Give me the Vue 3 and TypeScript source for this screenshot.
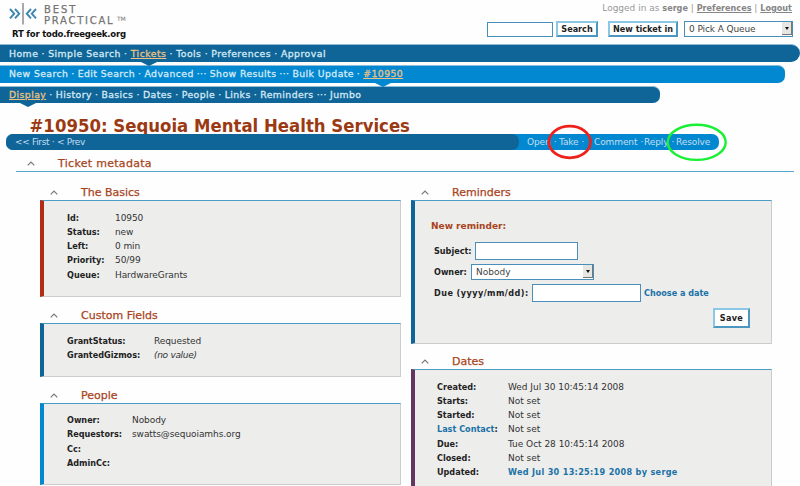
<script setup lang="ts">
interface Link { label: string; sep?: string; active?: boolean }
interface Row { label: string; value: string; kind?: string; link?: boolean }

const primary: Link[] = [
  { label: 'Home' }, { label: 'Simple Search' }, { label: 'Tickets', active: true },
  { label: 'Tools' }, { label: 'Preferences' }, { label: 'Approval' },
]
const secondary: Link[] = [
  { label: 'New Search' }, { label: 'Edit Search' }, { label: 'Advanced', sep: '···' },
  { label: 'Show Results', sep: '···' }, { label: 'Bulk Update' }, { label: '#10950', active: true },
]
const tertiary: Link[] = [
  { label: 'Display', active: true }, { label: 'History' }, { label: 'Basics' }, { label: 'Dates' },
  { label: 'People' }, { label: 'Links' }, { label: 'Reminders', sep: '···' }, { label: 'Jumbo' },
]
const bars = [
  { name: 'first', links: primary },
  { name: 'second', links: secondary },
  { name: 'third', links: tertiary },
]

const leftPanels: { name: string; title: string; rows: Row[] }[] = [
  { name: 'basics', title: 'The Basics', rows: [
    { label: 'Id:', value: '10950' }, { label: 'Status:', value: 'new' }, { label: 'Left:', value: '0 min' },
    { label: 'Priority:', value: '50/99' }, { label: 'Queue:', value: 'HardwareGrants' },
  ] },
  { name: 'custom', title: 'Custom Fields', rows: [
    { label: 'GrantStatus:', value: 'Requested' }, { label: 'GrantedGizmos:', value: '(no value)', kind: 'empty' },
  ] },
  { name: 'people', title: 'People', rows: [
    { label: 'Owner:', value: 'Nobody' }, { label: 'Requestors:', value: 'swatts@sequoiamhs.org' },
    { label: 'Cc:', value: '' }, { label: 'AdminCc:', value: '' },
  ] },
]
const dates: Row[] = [
  { label: 'Created:', value: 'Wed Jul 30 10:45:14 2008' }, { label: 'Starts:', value: 'Not set' },
  { label: 'Started:', value: 'Not set' }, { label: 'Last Contact', value: 'Not set', link: true },
  { label: 'Due:', value: 'Tue Oct 28 10:45:14 2008' }, { label: 'Closed:', value: 'Not set' },
  { label: 'Updated:', value: 'Wed Jul 30 13:25:19 2008 by serge', kind: 'strong' },
]
</script>

<template>
  <div class="page">
    <header class="top">
      <div class="brand">
        <div class="logo">
          <svg class="mark" width="30" height="24" viewBox="0 0 30 24" fill="none">
            <path d="M1 7l4.200 4.700L1 16.400M6 7l4.200 4.700L6 16.400M22 7l-4.200 4.700 4.200 4.700M27 7l-4.200 4.700 4.200 4.700" stroke="#3b87ad" stroke-width="1.9" />
            <path d="M14 1v21.500" stroke="#858585" stroke-width="1.4" />
          </svg>
          <div class="wordmark"><span class="best">BEST</span><div class="prac"><span>PRACTICAL</span><small>TM</small></div></div>
        </div>
        <div class="site">RT for todo.freegeek.org</div>
      </div>
      <div class="tools">
        <div class="login">Logged in as <b>serge</b> | <b class="u">Preferences</b> | <b class="u">Logout</b></div>
        <div class="controls">
          <input class="field search" type="text" />
          <button class="btn find">Search</button>
          <button class="btn new">New ticket in</button>
          <div class="select queue"><span>0 Pick A Queue</span><i class="drop"></i></div>
        </div>
      </div>
    </header>

    <nav v-for="bar in bars" :key="bar.name" class="bar" :class="bar.name">
      <template v-for="(l, i) in bar.links" :key="l.label">
        <a :class="{ active: l.active }">{{ l.label }}</a><span v-if="i < bar.links.length - 1" class="sep">{{ l.sep ?? '·' }}</span>
      </template>
    </nav>

    <h1>#10950: Sequoia Mental Health Services</h1>
    <div class="actions">
      <div class="paging">&lt;&lt; First · &lt; Prev</div>
      <div class="links"><a class="open">Open<i>·</i></a><a class="take">Take<i>·</i></a><a class="comment">Comment<i>·</i></a><a class="reply">Reply<i>·</i></a><a>Resolve</a></div>
      <svg class="rings" width="184" height="40" viewBox="0 0 184 40" fill="none">
        <ellipse cx="24.7" cy="19" rx="20.8" ry="15.8" stroke="#ee2019" stroke-width="2.7" />
        <ellipse cx="151.700" cy="19.3" rx="29" ry="17.6" stroke="#19f034" stroke-width="2.4" />
      </svg>
    </div>

    <div class="meta head">
      <svg class="caret" width="8" height="5" viewBox="0 0 8 5"><path d="M.7 4.4L4 1.1l3.3 3.3" /></svg>
      <h2>Ticket metadata</h2>
    </div>

    <main class="columns">
      <div class="col">
        <section v-for="p in leftPanels" :key="p.name" :class="p.name">
          <div class="head"><svg class="caret" width="8" height="5" viewBox="0 0 8 5"><path d="M.7 4.4L4 1.1l3.3 3.3" /></svg><h2>{{ p.title }}</h2></div>
          <div class="box">
            <div v-for="r in p.rows" :key="r.label" class="row"><b>{{ r.label }}</b><span :class="r.kind">{{ r.value }}</span></div>
          </div>
        </section>
      </div>
      <div class="col">
        <section class="reminders">
          <div class="head"><svg class="caret" width="8" height="5" viewBox="0 0 8 5"><path d="M.7 4.4L4 1.1l3.3 3.3" /></svg><h2>Reminders</h2></div>
          <div class="box">
            <h3>New reminder:</h3>
            <div class="line subj"><b>Subject:</b><input class="field" type="text" /></div>
            <div class="line own"><b>Owner:</b><div class="select"><span>Nobody</span><i class="drop"></i></div></div>
            <div class="line due"><b>Due (yyyy/mm/dd):</b><input class="field" type="text" /><a>Choose a date</a></div>
            <div class="save"><button class="btn">Save</button></div>
          </div>
        </section>
        <section class="dates">
          <div class="head"><svg class="caret" width="8" height="5" viewBox="0 0 8 5"><path d="M.7 4.4L4 1.1l3.3 3.3" /></svg><h2>Dates</h2></div>
          <div class="box">
            <div v-for="r in dates" :key="r.label" class="row"><b><template v-if="r.link"><a>{{ r.label }}</a>:</template><template v-else>{{ r.label }}</template></b><span :class="r.kind">{{ r.value }}</span></div>
          </div>
        </section>
      </div>
    </main>
  </div>
</template>

<style>
body { background: #fefefe; overflow: hidden; }
</style>

<style scoped>
* { box-sizing: border-box; }
.page { width: 800px; height: 486px; overflow: hidden; font-family: "DejaVu Sans", sans-serif; font-size: 9px; color: #333; white-space: nowrap; }
h1, h2, h3 { margin: 0; }
b, .strong, .btn { font-family: "DejaVu Sans Condensed", "DejaVu Sans", sans-serif; font-stretch: condensed; font-weight: bold; }

.top { display: flex; justify-content: space-between; height: 44px; }
.logo { display: flex; height: 27px; padding: 2px 0 0 9px; }
.wordmark { display: flex; flex-direction: column; padding: 2px 0 0 5px; font-size: 10px; line-height: 11px; color: #747474; letter-spacing: 1.75px; -webkit-text-stroke: .25px #747474; }
.best { letter-spacing: 1.9px; }
.prac { display: flex; }
.wordmark small { margin-left: 2.5px; font-size: 6px; line-height: 8px; letter-spacing: 0; -webkit-text-stroke: 0; }
.site { padding-left: 12px; font: bold 9.5px/13px "DejaVu Sans Condensed", sans-serif; letter-spacing: -.23px; color: #111; }
.tools { padding-top: 1px; }
.login { padding-right: 8px; height: 20px; line-height: 14px; text-align: right; color: #999; }
.login b { color: #858585; }
.login .u { text-decoration: underline; }
.controls { display: flex; height: 16px; padding-right: 7px; }
.field { display: block; margin: 0; padding: 0; border: 1px solid #4a8fb9; background: #fff; border-radius: 0; }
.search { width: 66px; height: 15px; margin-top: 1px; }
.btn { display: block; height: 16px; padding: 0; border: 2px solid; border-color: #8cc7e5 #4c97c0 #4c97c0 #8cc7e5; outline: 0; background: #fff; color: #222; font-size: 9px; line-height: 11px; border-radius: 0; }
.find { width: 42px; margin-left: 3px; }
.new { width: 70px; margin: 0 6px 0 10px; }
.select { display: flex; justify-content: space-between; height: 16px; border: 1px solid #4a8fb9; background: #fff; color: #444; line-height: 14px; padding-left: 4px; }
.queue { width: 109px; letter-spacing: -.1px; }
.drop { display: flex; align-items: center; justify-content: center; width: 10px; height: 13px; background: #e6e6e2; border-right: 1px solid #777; border-bottom: 1px solid #777; }
.drop::after { content: ""; border: 2.5px solid transparent; border-top: 3px solid #111; border-bottom: 0; }

.bar { display: flex; height: 18px; margin-bottom: 3px; padding-left: 9px; border-top: 1px solid #8fbdd8; font-size: 9.3px; letter-spacing: .42px; line-height: 17px; color: #d5e9f5; background: #0f6598; -webkit-text-stroke: .3px; }
.first { border-radius: 0 9px 9px 0; letter-spacing: .47px; }
.second { width: 785px; background: #0288d1; border-radius: 0 7px 7px 0; line-height: 16px; }
.third { width: 660px; height: 17px; border-radius: 0 7px 7px 0; margin-bottom: 0; line-height: 16px; }
.sep { padding: 0 3px 0 2.9px; }
.first .sep { padding: 0 3.2px; }
.third .sep { padding: 0 3.1px; }
.active { position: relative; color: #ecc182; text-decoration: underline; }
.active::after { content: ""; position: absolute; left: 50%; top: 17px; margin-left: -8px; border: 8px solid transparent; border-top: 4px solid #0f6598; border-bottom: 0; z-index: 2; }
.second .active::after { border-top-color: #0288d1; }
.third .active::after { top: 16px; }

h1 { height: 31px; padding: 12px 0 0 29.5px; font: bold 18.4px/22px "DejaVu Sans Condensed", sans-serif; color: #9b3a12; }
.actions { position: relative; display: flex; width: 713px; height: 16px; margin: 0 0 0 6px; background: #0288d1; border-radius: 7px; line-height: 16px; color: #c3dff0; letter-spacing: -.1px; }
.paging { width: 513px; padding-left: 9px; background: #0f6598; border-radius: 7px; letter-spacing: -.32px; }
.links { display: flex; padding-left: 8px; }
.links i { margin-left: 3px; font-style: normal; }
.open { width: 32px; }
.take { width: 35px; }
.comment { width: 50px; }
.reply { width: 32px; }
.rings { position: absolute; left: 539px; top: -11px; }

.head { display: flex; align-items: center; }
.head h2 { font-weight: normal; font-size: 11px; color: #a8441c; -webkit-text-stroke: .25px; }
.caret { fill: none; stroke: #777; stroke-width: 1.2; }
.meta { width: 778px; height: 22px; margin-left: 16px; padding: 5px 0 0 11px; border-bottom: 1px solid #57a4cc; }
.meta h2 { padding-left: 23px; letter-spacing: .3px; }

.columns { display: flex; gap: 10px; padding: 12px 0 0 40px; }
.col { width: 361px; }
.col .head { height: 16px; padding-left: 10px; }
.col .head h2 { padding-left: 23px; }
.box { border-top: 1px solid #4b9cc7; border-left: 4px solid #0f6598; border-right: 1px solid #ccc; border-bottom: 1px solid #ccc; background: #ededec; padding: 9.5px 0 0 23px; }
.row { display: flex; height: 14.3px; line-height: 14px; }
.row b { color: #222; }
.row span { letter-spacing: -.08px; }
.dates .row span { letter-spacing: -.03px; }
.row .strong, .dates .row .strong { letter-spacing: .32px; }
.basics .box { height: 97px; }
.basics b { width: 48px; }
.basics .box { border-left-color: #b32d15; }
.custom { padding-top: 10px; }
.custom .box { height: 54px; }
.custom b { width: 87px; }
.people { padding-top: 10px; }
.people .box { height: 82px; border-left-color: #0288d1; padding-top: 9px; }
.people b { width: 65px; }
.empty { font-style: italic; }
.row .empty { letter-spacing: -.3px; }
.strong, .row a, .due a { color: #1a72a6; }
.reminders .box { height: 144px; padding: 18px 0 0 16px; }
h3 { height: 14px; line-height: 14px; font-size: 9px; color: #a8441c; }
.line { display: flex; align-items: center; padding-left: 3px; color: #222; }
.line b { color: #222; }
.subj { height: 18px; margin-top: 9px; }
.subj b { width: 41px; }
.subj .field { width: 103px; height: 18px; }
.own { height: 16px; margin-top: 4px; }
.own b { width: 37px; }
.own .select { width: 123px; }
.due { height: 18px; margin-top: 4px; }
.due b { width: 98px; letter-spacing: .45px; }
.due .field { width: 109px; height: 18px; margin-right: 3px; }
.due a { font: bold 9px "DejaVu Sans Condensed", sans-serif; }
.save { display: flex; justify-content: flex-end; padding: 6px 21px 0 0; }
.save .btn { width: 37px; height: 20px; letter-spacing: .3px; }
.dates { padding-top: 9px; }
.dates .box { height: 130px; border-left-color: #633560; padding-left: 22px; }
.dates b { width: 71px; }
</style>
